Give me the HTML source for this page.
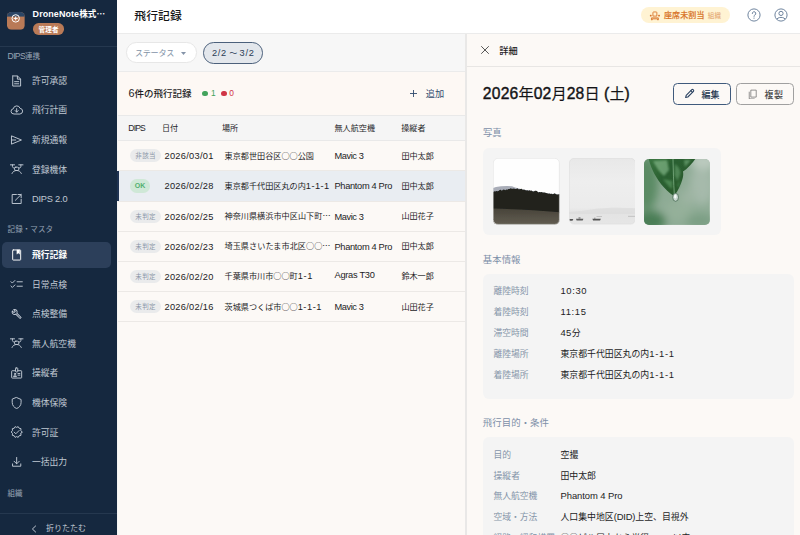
<!DOCTYPE html>
<html lang="ja">
<head>
<meta charset="utf-8">
<title>飛行記録</title>
<style>
*{box-sizing:border-box;margin:0;padding:0}
html,body{width:800px;height:535px;overflow:hidden}
body{font-family:"Liberation Sans","Noto Sans CJK JP",sans-serif;background:#fcf9f6;color:#1d1d1f;position:relative;font-size:9px;line-height:1}
.g{position:absolute;left:0;top:0;width:0;height:0}
.abs{position:absolute;white-space:nowrap}
.t{position:absolute;white-space:nowrap;line-height:1}
.cj{font-family:"Noto Sans CJK JP",sans-serif}
.l{line-height:0}
.box{position:absolute}
#sb .ic{position:absolute;left:10.33px;width:13.33px;height:13.33px;transform:translateY(-50%);stroke:#c4ccd7;fill:none;stroke-width:1.7;stroke-linecap:round;stroke-linejoin:round}
.hr{position:absolute;height:1px}
.bd{position:absolute;height:13.2px;border-radius:6.6px;background:#eaebec}
.card{position:absolute;left:482.7px;background:#f4f4f4;border-radius:6px}
.btn{position:absolute;top:83px;height:21.6px;border-radius:4.5px;border:1px solid #3f5a7c}
</style>
</head>
<body>
<!-- ========== SIDEBAR ========== -->
<nav id="sb" class="g">
  <div class="box" style="left:0;top:0;width:117px;height:535px;background:#15283f"></div>
  <svg class="abs" style="left:7px;top:12.3px" width="17.8" height="17.8" viewBox="0 0 17.8 17.8">
    <defs><clipPath id="lg"><rect x="0" y="0" width="17.8" height="17.8" rx="4.6"/></clipPath></defs>
    <g clip-path="url(#lg)"><rect width="17.8" height="17.8" fill="#b97a57"/><rect width="17.8" height="4.6" fill="#2b4666"/></g>
    <circle cx="8.700" cy="6.400" r="3.700" fill="none" stroke="#fff" stroke-width="1"/><path d="M6.700 6.400h4M8.700 4.400v4" stroke="#fff" stroke-width="1"/>
  </svg>
  <div class="box" style="left:32.500px;top:23.200px;width:31.800px;height:11.400px;border-radius:5.700px;background:#b97a57"></div>
  <div class="hr" style="left:0;top:45.600px;width:117px;background:#25384f"></div>
  <div class="box" style="left:2px;top:241.600px;width:109.300px;height:26.800px;border-radius:5px;background:#2c3f5a"></div>
  <svg class="ic" style="top:81px" viewBox="0 0 24 24"><path d="M6.200 2.900h7.300l5.600 5.600v12.600H4.900V2.900z"/><path d="M13.300 3.200v5.500h5.500"/><path d="M8.300 13.200h7.400M8.300 17h7.400"/></svg>
  <svg class="ic" style="top:110px" viewBox="0 0 24 24"><path d="M6.500 19.200a4.700 4.700 0 0 1-.6-9.350 6.300 6.300 0 0 1 12.250-.75 5.100 5.100 0 0 1 .35 10.100z"/><path d="M12 9.500v6.200M9.200 13l2.800 2.800 2.800-2.800"/></svg>
  <svg class="ic" style="top:139.5px" viewBox="0 0 24 24"><path d="M3.300 4.800L20.600 12 3.300 19.200z"/><path d="M3.300 12h7"/></svg>
  <svg class="ic" style="top:169px" viewBox="0 0 24 24"><path d="M.6 4.500h7.600M15.800 4.500h7.600M4.400 4.500v3.200c0 1.100.7 1.900 1.900 2.200l1.800.4M19.600 4.500v3.200c0 1.100-.7 1.900-1.900 2.200l-1.800.4"/><rect x="8.100" y="8.700" width="7.800" height="6" rx="2.400"/><path d="M3.600 20.100c1.500-3.500 4.400-5.400 8.400-5.400s6.900 1.900 8.400 5.400"/></svg>
  <svg class="ic" style="top:198.5px" viewBox="0 0 24 24"><path d="M11.500 3.900H3.900v16.200h16.200v-7.600"/><path d="M14.300 3.900h5.800v5.800M20.100 3.900L9.700 14.300"/></svg>
  <svg class="ic" style="top:255px;stroke:#fff" viewBox="0 0 24 24"><path d="M5.800 2.900h12.400a1 1 0 0 1 1 1v16.200a1 1 0 0 1-1 1H5.800a1 1 0 0 1-1-1V3.900a1 1 0 0 1 1-1z"/><path d="M12.300 3.200v7.300l2.600-1.900 2.600 1.900V3.200z" fill="#fff" stroke-width=".6"/></svg>
  <svg class="ic" style="top:284.3px" viewBox="0 0 24 24"><path d="M1.700 7.800l2.500 2.500 4.600-4.600M1.700 15.800l2.500 2.500 4.600-4.600M12.800 8h9.400M12.800 16h9.400"/></svg>
  <svg class="ic" style="top:313.8px" viewBox="0 0 24 24"><path fill="#c4ccd7" stroke="none" transform="translate(12 12) scale(.82) translate(-12 -12)" d="M22.610 18.990l-9.080-9.080c.930-2.340.450-5.100-1.440-7C9.790.610 6.210.400 3.660 2.260L7.500 6.110 6.080 7.520 2.250 3.690C.390 6.230.600 9.820 2.900 12.110c1.860 1.860 4.570 2.350 6.890 1.480l9.110 9.110c.390.390 1.020.390 1.410 0l2.300-2.300c.4-.380.4-1.010 0-1.410zm-3 1.600l-9.460-9.460c-.610.450-1.290.720-2 .820-1.360.2-2.790-.210-3.830-1.250C3.370 9.760 2.930 8.500 3 7.260l3.090 3.090 4.240-4.240-3.090-3.090c1.240-.070 2.490.370 3.440 1.310 1.080 1.080 1.490 2.570 1.240 3.960-.120.710-.420 1.370-.880 1.960l9.450 9.450-.880.890z"/></svg>
  <svg class="ic" style="top:343px" viewBox="0 0 24 24"><path d="M.6 4.500h7.600M15.800 4.500h7.600M4.400 4.500v3.200c0 1.100.7 1.900 1.900 2.200l1.800.4M19.600 4.500v3.200c0 1.100-.7 1.900-1.900 2.200l-1.800.4"/><rect x="8.100" y="8.700" width="7.800" height="6" rx="2.400"/><path d="M3.600 20.100c1.500-3.500 4.400-5.400 8.400-5.400s6.900 1.900 8.400 5.400"/></svg>
  <svg class="ic" style="top:373px" viewBox="0 0 24 24"><path d="M9.700 7.900H4a1 1 0 0 0-1 1v11.200a1 1 0 0 0 1 1h16a1 1 0 0 0 1-1V8.900a1 1 0 0 0-1-1h-5.700"/><path d="M11 2.900h2a1 1 0 0 1 1 1v5.200a1 1 0 0 1-1 1h-2a1 1 0 0 1-1-1V3.900a1 1 0 0 1 1-1z"/><circle cx="9" cy="13.600" r="1.200"/><path d="M6.400 17.700c.4-1.300 1.400-1.800 2.600-1.800s2.200.5 2.600 1.800zM14.300 13h3.500M14.300 15.900h3.500"/></svg>
  <svg class="ic" style="top:402.5px" viewBox="0 0 24 24"><path d="M12 2.200l8 3.500v5.300c0 5-3.400 9.600-8 10.900-4.600-1.300-8-5.900-8-10.900V5.700z"/></svg>
  <svg class="ic" style="top:432.3px" viewBox="0 0 24 24"><path d="M21.800 12l-2.300-2.600.3-3.400-3.400-.8L14.700 2.300 12 3.700 9.300 2.300 7.600 5.200l-3.400.8.300 3.400L2.200 12l2.300 2.600-.3 3.400 3.400.8 1.700 2.900 2.700-1.400 2.700 1.400 1.700-2.900 3.400-.8-.3-3.400z"/><path d="M7.600 12.300l2.900 2.900 5.900-5.900"/></svg>
  <svg class="ic" style="top:461.8px" viewBox="0 0 24 24"><path d="M12 3.800v11.400M7.300 10.600L12 15.300l4.700-4.700M4.600 15.400v4.200h14.800v-4.200"/></svg>
  <div class="hr" style="left:0;top:512.600px;width:117px;background:#25384f"></div>
  <svg class="abs" style="left:30.500px;top:524.600px;fill:none;stroke:#c0c8d3;stroke-width:1;stroke-linecap:round;stroke-linejoin:round" width="6" height="8" viewBox="0 0 6 8"><path d="M4.600 1L1.400 4l3.200 3"/></svg>
<div class="t" style="left:32.6px;top:9px;font-size:8.6px;color:#fff;font-weight:700"><span class="l" style="font-size:1.04em;letter-spacing:0.10px">DroneNote</span>株式<span class="cj">…</span></div>
<div class="t" style="left:38.6px;top:27px;font-size:6.6px;color:#fff;font-weight:700;letter-spacing:0.06px">管理者</div>
<div class="t" style="left:7.6px;top:53px;font-size:7.5px;color:#98a4b5"><span class="l" style="font-size:1.14em;letter-spacing:-0.64px">DIPS</span>連携</div>
<div class="t" style="left:31.9px;top:77px;font-size:8.8px;color:#c0c8d3;letter-spacing:0.03px">許可承認</div>
<div class="t" style="left:31.9px;top:106px;font-size:8.8px;color:#c0c8d3;letter-spacing:0.03px">飛行計画</div>
<div class="t" style="left:31.9px;top:136px;font-size:8.8px;color:#c0c8d3;letter-spacing:0.03px">新規通報</div>
<div class="t" style="left:31.9px;top:166px;font-size:8.8px;color:#c0c8d3;letter-spacing:0.03px">登録機体</div>
<div class="t" style="left:31.9px;top:195px;font-size:8.8px;color:#c0c8d3"><span class="l" style="font-size:1.05em;letter-spacing:-0.18px">DIPS 2.0</span></div>
<div class="t" style="left:7.6px;top:226px;font-size:7.5px;color:#98a4b5;letter-spacing:0.08px">記録・マスタ</div>
<div class="t" style="left:31.9px;top:251px;font-size:8.8px;color:#fff;font-weight:700;letter-spacing:0.03px">飛行記録</div>
<div class="t" style="left:31.9px;top:281px;font-size:8.8px;color:#c0c8d3;letter-spacing:0.03px">日常点検</div>
<div class="t" style="left:31.9px;top:310px;font-size:8.8px;color:#c0c8d3;letter-spacing:0.03px">点検整備</div>
<div class="t" style="left:31.9px;top:340px;font-size:8.8px;color:#c0c8d3;letter-spacing:0.03px">無人航空機</div>
<div class="t" style="left:31.9px;top:369px;font-size:8.8px;color:#c0c8d3;letter-spacing:0.05px">操縦者</div>
<div class="t" style="left:31.9px;top:399px;font-size:8.8px;color:#c0c8d3;letter-spacing:0.03px">機体保険</div>
<div class="t" style="left:31.9px;top:429px;font-size:8.8px;color:#c0c8d3;letter-spacing:0.05px">許可証</div>
<div class="t" style="left:31.9px;top:458px;font-size:8.8px;color:#c0c8d3;letter-spacing:0.03px">一括出力</div>
<div class="t" style="left:7.6px;top:490px;font-size:7.5px;color:#98a4b5">組織</div>
<div class="t" style="left:46px;top:525px;font-size:8px;color:#c0c8d3;letter-spacing:-0.02px">折りたたむ</div>
</nav>

<!-- ========== TOP HEADER ========== -->
<header id="hd" class="g">
  <div class="box" style="left:117px;top:0;width:683px;height:33.300px;background:#fff"></div>
  <div class="hr" style="left:117px;top:33.100px;width:683px;background:#ebebeb"></div>
  <div class="box" style="left:641px;top:6.800px;width:88.700px;height:16.700px;border-radius:8.400px;background:#fff3d3"></div>
  <svg class="abs" style="left:648.700px;top:9.500px;fill:none;stroke:#d8752a;stroke-width:1.800;stroke-linejoin:round" width="11.800" height="11.800" viewBox="0 0 24 24"><path d="M8 12.400V5.400a1.400 1.400 0 0 1 1.400-1.400h5.200a1.400 1.400 0 0 1 1.400 1.400v7z"/><rect x="1.800" y="9.800" width="3.600" height="3.600" rx="1" fill="#d8752a" stroke="none"/><rect x="18.600" y="9.800" width="3.600" height="3.600" rx="1" fill="#d8752a" stroke="none"/><path d="M5 16h14v4.200h-1.600V18H6.600v2.200H5z"/></svg>
  <svg class="abs" style="left:746.700px;top:8px;fill:none;stroke:#6f849e;stroke-width:1" width="14" height="14" viewBox="0 0 14 14"><circle cx="7" cy="7" r="6.100"/><path d="M5.300 5.500a1.750 1.750 0 1 1 2.600 1.500c-.6.350-.9.700-.9 1.400" stroke-linecap="round"/><circle cx="7" cy="10.100" r=".65" fill="#6f849e" stroke="none"/></svg>
  <svg class="abs" style="left:773.500px;top:8px;fill:none;stroke:#6f849e;stroke-width:1" width="14" height="14" viewBox="0 0 14 14"><defs><clipPath id="uc"><circle cx="7" cy="7" r="6.100"/></clipPath></defs><circle cx="7" cy="7" r="6.100"/><circle cx="7" cy="5.400" r="2.100"/><path d="M2 12.300c.9-1.900 2.700-2.900 5-2.900s4.100 1 5 2.900" clip-path="url(#uc)"/></svg>
<div class="t" style="left:134.3px;top:11px;font-size:11.8px;color:#141416;font-weight:500;letter-spacing:0.10px">飛行記録</div>
<div class="t" style="left:664px;top:12px;font-size:8px;color:#d8752a;font-weight:500;letter-spacing:0.12px;-webkit-text-stroke:.15px #d8752a">座席未割当</div>
<div class="t" style="left:707.8px;top:13px;font-size:6.5px;color:#e2a066;letter-spacing:0.20px">組織</div>
</header>

<!-- ========== LIST PANE ========== -->
<main id="list" class="g">
  <section id="fb" class="g">
    <div class="box" style="left:117px;top:34px;width:348.500px;height:37.200px;background:#f7f7f7"></div>
    <div class="hr" style="left:117px;top:70.900px;width:348.500px;background:#ebebeb"></div>
    <div class="box" style="left:125.500px;top:42.400px;width:71.800px;height:20.600px;border-radius:10.300px;background:#fff;border:1px solid #e7e7e7"></div>
    <svg class="abs" style="left:180.800px;top:52px" width="5" height="3" viewBox="0 0 5 3"><path d="M0 0h5L2.500 3z" fill="#8493a8"/></svg>
    <div class="box" style="left:202.700px;top:42.200px;width:60px;height:21.400px;border-radius:10.700px;background:#e3e7ec;border:1px solid #4b607b"></div>
<div class="t" style="left:135px;top:50px;font-size:8.1px;color:#8493a8;letter-spacing:-0.30px">ステータス</div>
<div class="t" style="left:212px;top:50px;font-size:8.1px;color:#2b3d56"><span class="l" style="font-size:1.14em;letter-spacing:0.71px">2/2</span> ～ <span class="l" style="font-size:1.14em;letter-spacing:0.71px">3/2</span></div>
  </section>
  <section id="sum" class="g">
    <div class="box" style="left:117px;top:71.900px;width:348.500px;height:43.500px;background:#fdf8f4"></div>
    <div class="hr" style="left:117px;top:115px;width:348.500px;background:#e9e9e9"></div>
    <div class="box" style="left:202.300px;top:90.500px;width:5.600px;height:5.600px;border-radius:50%;background:#43a35c"></div>
    <div class="box" style="left:221.100px;top:90.500px;width:5.600px;height:5.600px;border-radius:50%;background:#d03546"></div>
    <svg class="abs" style="left:410.400px;top:90px;stroke:#2f4a6d;stroke-width:.9" width="7" height="7" viewBox="0 0 7 7"><path d="M3.500 0v7M0 3.500h7"/></svg>
<div class="t" style="left:128.5px;top:89px;font-size:9.5px;color:#1c1c1e;font-weight:500;letter-spacing:-0.01px"><span class="l" style="font-size:1.14em">6</span>件の飛行記録</div>
<div class="t" style="left:210.9px;top:89px;font-size:8.4px;color:#43a35c">1</div>
<div class="t" style="left:229.2px;top:89px;font-size:8.4px;color:#d03546">0</div>
<div class="t" style="left:425.8px;top:90px;font-size:9.2px;color:#2f4a6d;letter-spacing:0.12px">追加</div>
  </section>
  <section id="tbl" class="g">
    <div class="box" style="left:117px;top:116px;width:348.500px;height:24.500px;background:#f5f5f5"></div>
    <div class="hr" style="left:117px;top:140.200px;width:348.500px;background:#e9e9e9"></div>
<div class="t" style="left:128.3px;top:125px;font-size:8.1px;color:#26262a"><span class="l" style="font-size:1.06em;letter-spacing:-0.84px">DIPS</span></div>
<div class="t" style="left:162px;top:125px;font-size:8.1px;color:#26262a">日付</div>
<div class="t" style="left:222px;top:125px;font-size:8.1px;color:#26262a">場所</div>
<div class="t" style="left:334.5px;top:125px;font-size:8.1px;color:#26262a">無人航空機</div>
<div class="t" style="left:401.3px;top:125px;font-size:8.1px;color:#26262a;letter-spacing:-0.05px">操縦者</div>
    <div id="row0" class="g">
      <div class="bd" style="left:130px;top:149.2px;width:30.800px"></div>
      <div class="hr" style="left:117px;top:170.37px;width:348.500px;background:#ece9e6"></div>
<div class="t" style="left:135.3px;top:153px;font-size:6.5px;color:#8a96a7;letter-spacing:0.40px">非該当</div>
<div class="t" style="left:164.5px;top:153px;font-size:8.14px;color:#1c1c1e"><span class="l" style="font-size:1.14em;letter-spacing:0.27px">2026/03/01</span></div>
<div class="t" style="left:224.5px;top:152px;font-size:8.14px;color:#1c1c1e;letter-spacing:0.01px">東京都世田谷区<span class="cj">○○</span>公園</div>
<div class="t" style="left:334.5px;top:153px;font-size:8.14px;color:#1c1c1e"><span class="l" style="font-size:1.14em;letter-spacing:-0.44px">Mavic 3</span></div>
<div class="t" style="left:401.6px;top:153px;font-size:8.14px;color:#1c1c1e;letter-spacing:-0.11px">田中太郎</div>
    </div>
    <div id="row1" class="g">
      <div class="box" style="left:117px;top:171.07px;width:348.500px;height:29.87px;background:#e9edf2"></div>
      <div class="bd" style="left:130px;top:179.37px;width:19.600px;background:#cfe8d7"></div>
      <div class="hr" style="left:117px;top:200.54px;width:348.500px;background:#ece9e6"></div>
<div class="t" style="left:134.8px;top:183px;font-size:6.2px;color:#52b070;font-weight:700"><span class="l" style="font-size:1.14em">OK</span></div>
<div class="t" style="left:164.5px;top:183px;font-size:8.14px;color:#1c1c1e"><span class="l" style="font-size:1.14em;letter-spacing:0.27px">2026/02/28</span></div>
<div class="t" style="left:224.5px;top:183px;font-size:8.14px;color:#1c1c1e">東京都千代田区丸の内<span class="l" style="font-size:1.14em;letter-spacing:0.47px">1-1-1</span></div>
<div class="t" style="left:334.5px;top:183px;font-size:8.14px;color:#1c1c1e"><span class="l" style="font-size:1.14em;letter-spacing:-0.33px">Phantom 4 Pro</span></div>
<div class="t" style="left:401.6px;top:183px;font-size:8.14px;color:#1c1c1e;letter-spacing:-0.11px">田中太郎</div>
    </div>
    <div id="row2" class="g">
      <div class="bd" style="left:130px;top:209.54px;width:30.800px"></div>
      <div class="hr" style="left:117px;top:230.71px;width:348.500px;background:#ece9e6"></div>
<div class="t" style="left:135.3px;top:214px;font-size:6.5px;color:#8a96a7;letter-spacing:0.40px">未判定</div>
<div class="t" style="left:164.5px;top:214px;font-size:8.14px;color:#1c1c1e"><span class="l" style="font-size:1.14em;letter-spacing:0.27px">2026/02/25</span></div>
<div class="t" style="left:224.5px;top:212px;font-size:8.14px;color:#1c1c1e;letter-spacing:0.03px">神奈川県横浜市中区山下町<span class="cj">…</span></div>
<div class="t" style="left:334.5px;top:214px;font-size:8.14px;color:#1c1c1e"><span class="l" style="font-size:1.14em;letter-spacing:-0.44px">Mavic 3</span></div>
<div class="t" style="left:401.6px;top:213px;font-size:8.14px;color:#1c1c1e;letter-spacing:-0.11px">山田花子</div>
    </div>
    <div id="row3" class="g">
      <div class="bd" style="left:130px;top:239.71px;width:30.800px"></div>
      <div class="hr" style="left:117px;top:260.88px;width:348.500px;background:#ece9e6"></div>
<div class="t" style="left:135.3px;top:244px;font-size:6.5px;color:#8a96a7;letter-spacing:0.40px">未判定</div>
<div class="t" style="left:164.5px;top:244px;font-size:8.14px;color:#1c1c1e"><span class="l" style="font-size:1.14em;letter-spacing:0.27px">2026/02/23</span></div>
<div class="t" style="left:224.5px;top:242px;font-size:8.14px;color:#1c1c1e;letter-spacing:0.05px">埼玉県さいたま市北区<span class="cj">○○…</span></div>
<div class="t" style="left:334.5px;top:244px;font-size:8.14px;color:#1c1c1e"><span class="l" style="font-size:1.14em;letter-spacing:-0.33px">Phantom 4 Pro</span></div>
<div class="t" style="left:401.6px;top:243px;font-size:8.14px;color:#1c1c1e;letter-spacing:-0.11px">田中太郎</div>
    </div>
    <div id="row4" class="g">
      <div class="bd" style="left:130px;top:269.88px;width:30.800px"></div>
      <div class="hr" style="left:117px;top:291.05px;width:348.500px;background:#ece9e6"></div>
<div class="t" style="left:135.3px;top:274px;font-size:6.5px;color:#8a96a7;letter-spacing:0.40px">未判定</div>
<div class="t" style="left:164.5px;top:274px;font-size:8.14px;color:#1c1c1e"><span class="l" style="font-size:1.14em;letter-spacing:0.27px">2026/02/20</span></div>
<div class="t" style="left:224.5px;top:272px;font-size:8.14px;color:#1c1c1e">千葉県市川市<span class="cj">○○</span>町<span class="l" style="font-size:1.14em;letter-spacing:0.71px">1-1</span></div>
<div class="t" style="left:334.5px;top:272px;font-size:8.14px;color:#1c1c1e"><span class="l" style="font-size:1.14em;letter-spacing:-0.28px">Agras T30</span></div>
<div class="t" style="left:401.6px;top:273px;font-size:8.14px;color:#1c1c1e;letter-spacing:-0.11px">鈴木一郎</div>
    </div>
    <div id="row5" class="g">
      <div class="bd" style="left:130px;top:300.05px;width:30.800px"></div>
      <div class="hr" style="left:117px;top:321.22px;width:348.500px;background:#ece9e6"></div>
<div class="t" style="left:135.3px;top:304px;font-size:6.5px;color:#8a96a7;letter-spacing:0.40px">未判定</div>
<div class="t" style="left:164.5px;top:304px;font-size:8.14px;color:#1c1c1e"><span class="l" style="font-size:1.14em;letter-spacing:0.27px">2026/02/16</span></div>
<div class="t" style="left:224.5px;top:303px;font-size:8.14px;color:#1c1c1e">茨城県つくば市<span class="cj">○○</span><span class="l" style="font-size:1.14em;letter-spacing:0.55px">1-1-1</span></div>
<div class="t" style="left:334.5px;top:304px;font-size:8.14px;color:#1c1c1e"><span class="l" style="font-size:1.14em;letter-spacing:-0.44px">Mavic 3</span></div>
<div class="t" style="left:401.6px;top:304px;font-size:8.14px;color:#1c1c1e;letter-spacing:-0.11px">山田花子</div>
    </div>

  </section>
  <div class="box" style="left:117px;top:33.500px;width:1.200px;height:501.500px;background:#f5f4f3"></div>
  <div class="box" style="left:117.300px;top:171px;width:2.100px;height:29.700px;background:#1f3352"></div>
</main>

<!-- ========== DETAIL PANE ========== -->
<aside id="dp" class="g">
  <div class="box" style="left:465.300px;top:34px;width:1.300px;height:501px;background:#e9e8e7"></div>
  <div class="hr" style="left:466.600px;top:66px;width:333.400px;background:#e8e6e4"></div>
  <svg class="abs" style="left:481.100px;top:46.250px;stroke:#444;stroke-width:.9;stroke-linecap:round" width="8" height="8" viewBox="0 0 8 8"><path d="M.5 .5l7 7M7.500 .5l-7 7"/></svg>
  <div class="btn" style="left:673px;width:57.600px"></div>
  <svg class="abs" style="left:684.400px;top:88.400px;fill:none;stroke:#2a4261;stroke-width:2.300;stroke-linejoin:round;stroke-linecap:round" width="11.200" height="11.200" viewBox="0 0 24 24"><path d="M3.500 20.500l1.200-4.700L16.800 3.700a2 2 0 0 1 2.800 0l.7.700a2 2 0 0 1 0 2.800L8.200 19.300z"/><path d="M14.800 5.800l3.400 3.400"/></svg>
  <div class="btn" style="left:736.400px;width:57.800px;border-color:#a0a0a0"></div>
  <svg class="abs" style="left:747.400px;top:88.600px;fill:none;stroke:#6a6a6a;stroke-width:1.600;stroke-linejoin:round" width="10.800" height="10.800" viewBox="0 0 24 24"><path d="M8.500 2.500h12v15.500h-12z"/><path d="M5 6v16h12"/></svg>
  <div class="card" style="top:147.500px;width:238px;height:87.600px"></div>
  <!-- photos -->
  <svg class="abs" style="left:493.3px;top:158.3px" width="66.7" height="66.7" viewBox="0 0 66.4 66.4">
    <defs><clipPath id="p1"><rect x="0" y="0" width="66.4" height="66.4" rx="5"/></clipPath>
    <linearGradient id="fd" x1="0" y1="0" x2="0" y2="1"><stop offset="0" stop-color="#48443a"/><stop offset="1" stop-color="#625d52"/></linearGradient>
    <filter id="b1" x="-5%" y="-5%" width="110%" height="110%"><feGaussianBlur stdDeviation=".45"/></filter></defs>
    <g clip-path="url(#p1)">
      <rect width="66.4" height="66.4" fill="#fefefe"/>
      <g filter="url(#b1)">
      <path d="M0 29.8L3 28.8 8 28.2 14 27.900 19 28.200 22 29.400 30 31.400 40 33 52 34.800 66.400 36.600V40H0z" fill="#a9adb8"/>
      <path d="M0 34.0L1.1 33.2L2.2 33.3L3.3 32.8L4.4 33.0L5.5 32.8L6.6 31.8L7.7 31.6L8.8 32.6L9.9 31.5L11.0 31.3L12.1 32.2L13.2 31.3L14.3 31.6L15.4 30.9L16.5 30.9L17.6 30.0L18.7 30.6L19.8 30.7L20.9 30.3L22.0 30.8L23.1 30.8L24.2 30.0L25.3 31.2L26.4 31.1L27.5 30.8L28.6 30.5L29.7 31.9L30.8 31.4L31.9 31.9L33.0 32.3L34.1 32.2L35.2 32.6L36.3 32.0L37.4 32.7L38.5 32.4L39.6 33.3L40.7 33.4L41.8 32.5L42.9 32.7L44.0 33.1L45.1 34.4L46.2 33.8L47.3 34.2L48.4 33.9L49.5 34.3L50.6 34.3L51.7 34.3L52.8 34.8L53.9 35.0L55.0 35.5L56.1 35.3L57.2 35.8L58.3 35.7L59.4 36.0L60.5 35.6L61.6 35.0L62.7 36.1L63.8 36.3L64.9 36.3L66.0 35.9L66.4 36.2V55H0z" fill="#20221e"/>
      <path d="M0 50.400C20 51 45 52.200 66.400 54.100V66.400H0z" fill="url(#fd)"/>
      </g>
    </g>
    <rect x=".3" y=".3" width="65.800" height="65.800" rx="4.700" fill="none" stroke="#e0e0e0" stroke-width=".6"/>
  </svg>
  <svg class="abs" style="left:568.5px;top:158.4px" width="66.800" height="66.400" viewBox="0 0 66.800 66.400">
    <defs><clipPath id="p2"><rect x=".3" y=".3" width="66.200" height="65.800" rx="5"/></clipPath>
    <linearGradient id="g2" x1="0" y1="0" x2="0" y2="1"><stop offset="0" stop-color="#e8e8e8"/><stop offset=".35" stop-color="#eeeeee"/><stop offset=".75" stop-color="#ebebeb"/><stop offset=".82" stop-color="#e3e3e3"/><stop offset="1" stop-color="#e6e6e6"/></linearGradient>
    <filter id="b2" x="-10%" y="-50%" width="120%" height="200%"><feGaussianBlur stdDeviation=".3"/></filter></defs>
    <g clip-path="url(#p2)">
      <rect width="66.800" height="66.400" fill="url(#g2)"/>
      <path d="M0 54c8-.5 16-1.500 24-2.800 10-1.500 26-2 42.800-1V56H0z" fill="#dcdcdc" opacity=".75" filter="url(#b2)"/>
      <g filter="url(#b2)">
      <path d="M0 61h4.300l-.8 1.700H0z" fill="#555"/>
      <path d="M7 60.700h7.400l-.7 1.700H7.600z" fill="#5e5e5e"/>
      <path d="M23.400 60.700h8.400l-.7 1.700h-7z" fill="#555"/>
      <path d="M9.500 59.300h2v1.400h-2zM25 59.800h1.500v1H25z" fill="#888"/>
      <path d="M27.500 58.200h5.500v.7h-5.500z" fill="#b5b5b5"/>
      <path d="M59 57.800h7.800v1.100H59z" fill="#c4c4c4"/>
      </g>
    </g>
    <rect x=".3" y=".3" width="66.200" height="65.800" rx="5" fill="none" stroke="#dcdcdc" stroke-width=".6"/>
  </svg>
  <svg class="abs" style="left:644.2px;top:158.8px" width="65.9" height="65.9" viewBox="0 0 65.9 65.9">
    <defs><clipPath id="p3"><rect x="0" y="0" width="65.9" height="65.9" rx="5"/></clipPath>
    <filter id="b3" x="-30%" y="-30%" width="160%" height="160%"><feGaussianBlur stdDeviation="4.500"/></filter>
    <filter id="b4" x="-10%" y="-10%" width="120%" height="120%"><feGaussianBlur stdDeviation=".8"/></filter>
    <filter id="b5" x="-10%" y="-10%" width="120%" height="120%"><feGaussianBlur stdDeviation=".35"/></filter>
    <linearGradient id="lf" x1="0" y1="0" x2="1" y2=".6"><stop offset="0" stop-color="#3b7742"/><stop offset=".45" stop-color="#2a5f30"/><stop offset="1" stop-color="#285a2e"/></linearGradient></defs>
    <g clip-path="url(#p3)">
      <rect width="65.9" height="65.9" fill="#8eab95"/>
      <g filter="url(#b3)">
        <ellipse cx="2" cy="24" rx="12" ry="28" fill="#5a8a63"/>
        <ellipse cx="6" cy="62" rx="16" ry="10" fill="#497d54"/>
        <ellipse cx="34" cy="52" rx="14" ry="10" fill="#94b09a"/>
        <ellipse cx="58" cy="26" rx="12" ry="20" fill="#a6baab"/>
        <ellipse cx="60" cy="2" rx="14" ry="8" fill="#bccabf"/>
        <ellipse cx="56" cy="62" rx="14" ry="7" fill="#7a9e83"/>
        <ellipse cx="44" cy="38" rx="8" ry="8" fill="#9db4a2"/>
      </g>
      <g filter="url(#b5)">
      <path d="M4.500 -1C6 6 10 16 17 25c4 5 8.500 9 12.500 11.700 1.300-.7 3-2.700 5-6.700 3.500-7 5.500-13 4.500-17.500C43 10 48 5 52 -1z" fill="url(#lf)"/>
      </g>
      <g filter="url(#b4)" opacity=".6">
        <path d="M9 2c3 6 6 11 11 15l5-6-2-10z" fill="#8fc294"/>
        <path d="M31 5c3 2 5 5 5.500 9l-3 8-3-6z" fill="#6aa371"/>
        <path d="M19 20c3 4 6 8 9 10l.5-8z" fill="#62a069"/>
        <path d="M40 1l7 0-6 7z" fill="#7db384"/>
        <path d="M33 26l3-5-1 8z" fill="#4f8f57"/>
      </g>
      <path d="M29 0c.3 12 .6 24 1.300 35" stroke="#9ccba0" stroke-width=".7" fill="none" opacity=".85"/>
      <ellipse cx="31.600" cy="38.300" rx="2.900" ry="4" fill="#c9d8d1" stroke="#456850" stroke-width=".8" filter="url(#b5)"/>
      <ellipse cx="31.300" cy="37.500" rx="1.200" ry="2.100" fill="#f6faf8"/>
    </g>
  </svg>
  <div class="card" style="top:273.800px;width:311.500px;height:125.500px"></div>
  <div class="card" style="top:437px;width:311.500px;height:120px"></div>
<div class="t" style="left:499.3px;top:47px;font-size:9.2px;color:#1c1c1e;font-weight:500;letter-spacing:0.12px">詳細</div>
<div class="t" style="left:482.8px;top:86px;font-size:15.2px;color:#141416;-webkit-text-stroke:.15px #141416"><span class="l" style="font-size:1.03em;letter-spacing:0.22px;-webkit-text-stroke:.4px #141416">2026</span>年<span class="l" style="font-size:1.03em;letter-spacing:0.22px;-webkit-text-stroke:.4px #141416">02</span>月<span class="l" style="font-size:1.03em;letter-spacing:0.22px;-webkit-text-stroke:.4px #141416">28</span>日 <span class="l" style="font-size:1.03em;letter-spacing:0.22px;-webkit-text-stroke:.4px #141416">(</span>土<span class="l" style="font-size:1.03em;letter-spacing:0.22px;-webkit-text-stroke:.4px #141416">)</span></div>
<div class="t" style="left:701.4px;top:91px;font-size:9px;color:#24364f;font-weight:500;letter-spacing:0.08px">編集</div>
<div class="t" style="left:764.6px;top:91px;font-size:9px;color:#454545;font-weight:500;letter-spacing:0.38px">複製</div>
<div class="t" style="left:482.9px;top:129px;font-size:9.3px;color:#7d8fa8">写真</div>
<div class="t" style="left:482.8px;top:255px;font-size:9.4px;color:#7d8fa8;letter-spacing:0.06px">基本情報</div>
<div class="t" style="left:493.5px;top:287px;font-size:8.8px;color:#8594a9;letter-spacing:-0.07px">離陸時刻</div>
<div class="t" style="left:560.5px;top:287px;font-size:8.9px;color:#1c1c1e"><span class="l" style="font-size:1.06em;letter-spacing:0.61px">10:30</span></div>
<div class="t" style="left:493.5px;top:308px;font-size:8.8px;color:#8594a9;letter-spacing:-0.07px">着陸時刻</div>
<div class="t" style="left:560.5px;top:308px;font-size:8.9px;color:#1c1c1e"><span class="l" style="font-size:1.06em;letter-spacing:0.65px">11:15</span></div>
<div class="t" style="left:493.5px;top:329px;font-size:8.8px;color:#8594a9;letter-spacing:-0.07px">滞空時間</div>
<div class="t" style="left:560.5px;top:329px;font-size:8.9px;color:#1c1c1e"><span class="l" style="font-size:1.06em;letter-spacing:0.32px">45</span>分</div>
<div class="t" style="left:493.5px;top:350px;font-size:8.8px;color:#8594a9;letter-spacing:-0.07px">離陸場所</div>
<div class="t" style="left:560.5px;top:350px;font-size:8.9px;color:#1c1c1e">東京都千代田区丸の内<span class="l" style="font-size:1.06em;letter-spacing:0.69px">1-1-1</span></div>
<div class="t" style="left:493.5px;top:371px;font-size:8.8px;color:#8594a9;letter-spacing:-0.07px">着陸場所</div>
<div class="t" style="left:560.5px;top:371px;font-size:8.9px;color:#1c1c1e">東京都千代田区丸の内<span class="l" style="font-size:1.06em;letter-spacing:0.69px">1-1-1</span></div>
<div class="t" style="left:482.8px;top:418px;font-size:9.4px;color:#7d8fa8;letter-spacing:0.09px">飛行目的・条件</div>
<div class="t" style="left:493.5px;top:451px;font-size:8.8px;color:#8594a9;letter-spacing:-0.11px">目的</div>
<div class="t" style="left:560.5px;top:451px;font-size:8.9px;color:#1c1c1e;letter-spacing:0.25px">空撮</div>
<div class="t" style="left:493.5px;top:472px;font-size:8.8px;color:#8594a9;letter-spacing:0.05px">操縦者</div>
<div class="t" style="left:560.5px;top:472px;font-size:8.9px;color:#1c1c1e">田中太郎</div>
<div class="t" style="left:493.5px;top:492px;font-size:8.8px;color:#8594a9;letter-spacing:-0.05px">無人航空機</div>
<div class="t" style="left:560.5px;top:492px;font-size:8.9px;color:#1c1c1e"><span class="l" style="font-size:1.06em;letter-spacing:-0.07px">Phantom 4 Pro</span></div>
<div class="t" style="left:493.5px;top:513px;font-size:8.8px;color:#8594a9;letter-spacing:-0.05px">空域・方法</div>
<div class="t" style="left:560.5px;top:513px;font-size:8.9px;color:#1c1c1e">人口集中地区<span class="l" style="font-size:1.06em;letter-spacing:-0.20px">(DID)</span>上空、目視外</div>
<div class="t" style="left:493.5px;top:534px;font-size:8.8px;color:#8594a9;letter-spacing:-0.02px">経路・緩和措置</div>
<div class="t" style="left:560.5px;top:534px;font-size:8.9px;color:#1c1c1e"><span class="cj">○○</span>ビル屋上から半径<span class="l" style="font-size:1.06em;letter-spacing:-0.02px">100m</span>以内</div>
</aside>
</body>
</html>
